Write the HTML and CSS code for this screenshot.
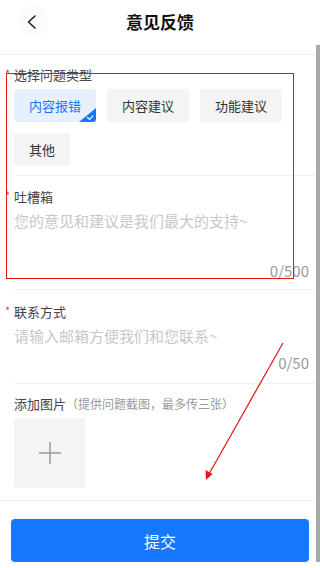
FILE: index.html
```html
<!DOCTYPE html>
<html lang="zh-CN">
<head>
  <meta charset="UTF-8" />
  <title>意见反馈</title>
  <link rel="stylesheet" href="styles.css">
</head>
<body>
  <div class="page">
    <div class="header">
      <div class="back">
        <svg width="30" height="30" viewBox="0 0 30 30">
          <path d="M17 10 L10.5 16 L17 22" fill="none" stroke="#222" stroke-width="1.6" stroke-linecap="round" stroke-linejoin="round"/>
        </svg>
      </div>
      <div class="title">意见反馈</div>
    </div>

    <div class="section types">
      <div class="label"><span class="star">*</span>选择问题类型</div>
      <div class="chips">
        <div class="chip active">内容报错
          <span class="corner">
            <svg width="17" height="14" viewBox="0 0 17 14">
              <path d="M17 0 L17 14 L0 14 Z" fill="#1677ff"/>
              <path d="M8.5 9.5 L10.5 11.3 L14 7.8" fill="none" stroke="#fff" stroke-width="1.2" stroke-linecap="round" stroke-linejoin="round"/>
            </svg>
          </span>
        </div>
        <div class="chip">内容建议</div>
        <div class="chip">功能建议</div>
        <div class="chip">其他</div>
      </div>
    </div>

    <div class="section">
      <div class="label"><span class="star">*</span>吐槽箱</div>
      <div class="placeholder tall">您的意见和建议是我们最大的支持~</div>
      <div class="counter">0/500</div>
    </div>

    <div class="section contact">
      <div class="label"><span class="star">*</span>联系方式</div>
      <div class="placeholder">请输入邮箱方便我们和您联系~</div>
      <div class="counter">0/50</div>
    </div>

    <div class="section last">
      <div class="label">添加图片<span class="hint">（提供问题截图，最多传三张）</span></div>
      <div class="upload">
        <svg width="24" height="24" viewBox="0 0 24 24">
          <path d="M12 1 V23 M1 12 H23" stroke="#999" stroke-width="1.5"/>
        </svg>
      </div>
    </div>

    <div class="footer">
      <button class="submit">提交</button>
    </div>

    <div class="mark-box"></div>
    <svg class="mark-arrow" width="320" height="568" viewBox="0 0 320 568">
      <line x1="283" y1="343" x2="209" y2="474" stroke="#e4151d" stroke-width="1.2"/>
      <path d="M206 480 L205.5 470 L212.5 474 Z" fill="#e4151d"/>
    </svg>
    <div class="scrollbar"></div>
  </div>
</body>
</html>
```

FILE: styles.css
```css
body {
  margin: 0;
  background: #fff;
  font-family: "Noto Sans CJK SC", "Noto Sans", sans-serif;
  color: #333;
}

.page {
  position: relative;
  width: 320px;
  height: 568px;
  overflow: hidden;
}

.header {
  position: relative;
  height: 54px;
  display: flex;
  align-items: center;
  justify-content: center;
  border-bottom: 1px solid #eee;
  margin-right: 4px;
}

.back {
  position: absolute;
  left: 18px;
  top: 6px;
  width: 30px;
  height: 30px;
  border-radius: 50%;
  background: #fbfbfb;
  box-shadow: 0 0 2px rgba(0, 0, 0, 0.04);
}

.back svg {
  display: block;
}

.title {
  font-size: 17px;
  font-weight: bold;
  color: #111;
  margin-top: -12px;
  margin-left: 4px;
}

.section {
  margin-left: 14px;
  padding: 12px 11px 8px 0;
  border-bottom: 1px solid #f0f0f0;
}

.section.types {
  padding-top: 11px;
  padding-bottom: 9px;
}

.section.contact {
  padding-top: 13px;
  padding-bottom: 10px;
}

.label {
  position: relative;
  font-size: 13px;
  line-height: 18px;
  color: #444;
}

.star {
  position: absolute;
  left: -9px;
  top: -2px;
  color: #f03b3b;
  font-size: 11px;
}

.hint {
  font-size: 12px;
  color: #999;
}

.chips {
  display: flex;
  flex-wrap: wrap;
  gap: 11px;
  margin-top: 5px;
}

.chip {
  position: relative;
  height: 33px;
  line-height: 33px;
  padding: 0 15px;
  font-size: 13px;
  background: #f4f4f4;
  color: #333;
  border-radius: 3px;
  min-width: 55px;
  box-sizing: border-box;
  text-align: center;
}

.chip.active {
  background: #e6f0ff;
  color: #1677ff;
  overflow: hidden;
}

.corner {
  position: absolute;
  right: 0;
  bottom: 0;
  height: 14px;
}

.corner svg {
  display: block;
}

.placeholder {
  margin-top: 4px;
  font-size: 15px;
  line-height: 22px;
  color: #c8c8c8;
}

.placeholder.tall {
  height: 45px;
}

.counter {
  margin-top: 6px;
  text-align: right;
  font-size: 15px;
  line-height: 20px;
  color: #999;
}

.section.last {
  border-bottom: none;
  padding-top: 11px;
  padding-bottom: 12px;
}

.upload {
  margin-top: 5px;
  width: 71px;
  height: 70px;
  background: #f4f4f4;
  border-radius: 3px;
  display: flex;
  align-items: center;
  justify-content: center;
}

.upload svg {
  display: block;
}

.footer {
  border-top: 1px solid #f0f0f0;
  padding: 18px 11px 0;
}

.submit {
  display: block;
  width: 100%;
  height: 43px;
  border: none;
  border-radius: 4px;
  background: #1677ff;
  color: #fff;
  font-family: inherit;
  font-size: 16px;
}

.mark-box {
  position: absolute;
  left: 6px;
  top: 73px;
  width: 286px;
  height: 204px;
  border: 1px solid #e4151d;
}

.mark-arrow {
  position: absolute;
  left: 0;
  top: 0;
  pointer-events: none;
}

.scrollbar {
  position: absolute;
  right: 0;
  top: 45px;
  width: 4px;
  height: 517px;
  background: #a9a9a9;
}
```
